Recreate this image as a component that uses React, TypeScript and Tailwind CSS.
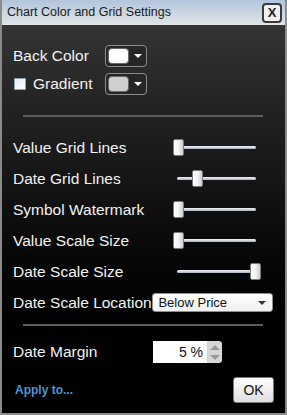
import React from "react";

const labelCls = "text-[15.5px] text-[#f2f2f2] leading-none";

function ColorPick({ swatch }: { swatch: string }) {
  return (
    <div className="flex h-[22px] w-[42px] items-center rounded-[4px] border border-[#8c8c8c] bg-[#262626] pl-[2px] pr-[4px]">
      <div className={`h-[16px] w-[21px] rounded-[4px] border border-[#6a6a6a] ${swatch}`} />
      <div className="ml-auto h-0 w-0 border-x-[4px] border-t-[4px] border-x-transparent border-t-white" />
    </div>
  );
}

function Slider({ value, start = 175 }: { value: number; start?: number }) {
  // track runs from start to 257 in page coords, thumb left edge at value
  return (
    <div className="relative h-[18px] w-[90px]">
      <div
        className="absolute top-[7px] h-[3px] rounded-full bg-gradient-to-b from-[#f4f6f8] to-[#a9b3bf]"
        style={{ left: start - 170, right: 4 }}
      />
      <div
        className="absolute top-0 h-[17px] w-[11px] rounded-[2px] border border-[#7b7b7b] bg-gradient-to-r from-[#ffffff] via-[#f3f3f3] to-[#c9ced6]"
        style={{ left: value - 170 }}
      />
    </div>
  );
}

function SliderRow({ label, value, start }: { label: string; value: number; start?: number }) {
  return (
    <div className="flex h-[31px] items-center">
      <span className={`${labelCls} w-[157px]`}>{label}</span>
      <Slider value={value} start={start} />
    </div>
  );
}

export default function App() {
  return (
    <div
      className="flex h-[415px] w-[287px] flex-col border-x-2 border-b-2 border-[#8a8a8a] bg-[#8a8a8a]"
      style={{ fontFamily: '"Liberation Sans", Arial, sans-serif' }}
    >
      {/* title bar */}
      <div className="flex h-[25px] shrink-0 items-center bg-gradient-to-b from-[#b2c5dc] to-[#e3e5e7] pl-[5px] pr-[3px]">
        <span className="text-[12.5px] text-[#1a1a1a]">Chart Color and Grid Settings</span>
        <button className="ml-auto flex h-[20px] w-[20px] items-center justify-center rounded-[4px] border-2 border-[#3a3a3a] bg-[#eef0f2] text-[13px] font-bold leading-none text-[#222]">
          X
        </button>
      </div>

      {/* content */}
      <div className="flex flex-1 flex-col bg-gradient-to-b from-[#343434] to-[#000000] pl-[11px] pr-[12px] pt-[20px]">
        <div className="flex h-[22px] items-center">
          <span className={`${labelCls} w-[92px]`}>Back Color</span>
          <ColorPick swatch="bg-white" />
        </div>
        <div className="mt-[6px] flex h-[22px] items-center">
          <div className="ml-[1px] h-[12px] w-[12px] border border-[#8e9db0] bg-gradient-to-br from-[#e7ecf2] to-[#ffffff]" />
          <span className={`${labelCls} ml-[7px] w-[72px]`}>Gradient</span>
          <ColorPick swatch="bg-[#cfcfcf]" />
        </div>

        <div className="mx-[10px] mt-[20px] h-[2px] bg-[#5c5c5c]" />

        <div className="mt-[15px] flex flex-col">
          <SliderRow label="Value Grid Lines" value={173} start={175} />
          <SliderRow label="Date Grid Lines" value={192} start={177} />
          <SliderRow label="Symbol Watermark" value={173} start={175} />
          <SliderRow label="Value Scale Size" value={173} start={175} />
          <SliderRow label="Date Scale Size" value={250} start={177} />
          <div className="flex h-[31px] items-center">
            <span className={`${labelCls} w-[140px] whitespace-nowrap`}>Date Scale Location</span>
            <div className="flex h-[19px] w-[121px] items-center rounded-[3px] border border-[#8f8f8f] bg-gradient-to-b from-[#ffffff] to-[#f0f0f0] pl-[5px] pr-[6px]">
              <span className="text-[13px] leading-none text-[#111]">Below Price</span>
              <div className="ml-auto h-0 w-0 border-x-[4px] border-t-[4px] border-x-transparent border-t-[#333]" />
            </div>
          </div>
        </div>

        <div className="mx-[10px] mt-[6px] h-[2px] bg-[#5c5c5c]" />

        <div className="mt-[15px] flex h-[22px] items-center">
          <span className={`${labelCls} w-[140px]`}>Date Margin</span>
          <div className="flex h-[22px] w-[54px] items-center justify-end bg-white pr-[4px]">
            <span className="text-[14px] leading-none text-[#111]">5 %</span>
          </div>
          <div className="flex h-[22px] w-[15px] flex-col items-center justify-center gap-[5px] rounded-r-[3px] bg-[#d6d6d6]">
            <div className="h-0 w-0 border-x-[5px] border-b-[5px] border-x-transparent border-b-[#9a9a9a]" />
            <div className="h-0 w-0 border-x-[5px] border-t-[5px] border-x-transparent border-t-[#9a9a9a]" />
          </div>
        </div>

        <div className="mt-[14px] flex items-center">
          <span className="pl-[2px] text-[12px] font-bold text-[#4d95d6]">Apply to...</span>
          <button className="ml-auto mr-[-1px] flex h-[26px] w-[41px] items-center justify-center rounded-[3px] border border-[#7a7a7a] bg-gradient-to-b from-[#ffffff] to-[#dedede] text-[14px] text-[#111]">
            OK
          </button>
        </div>
      </div>
    </div>
  );
}
